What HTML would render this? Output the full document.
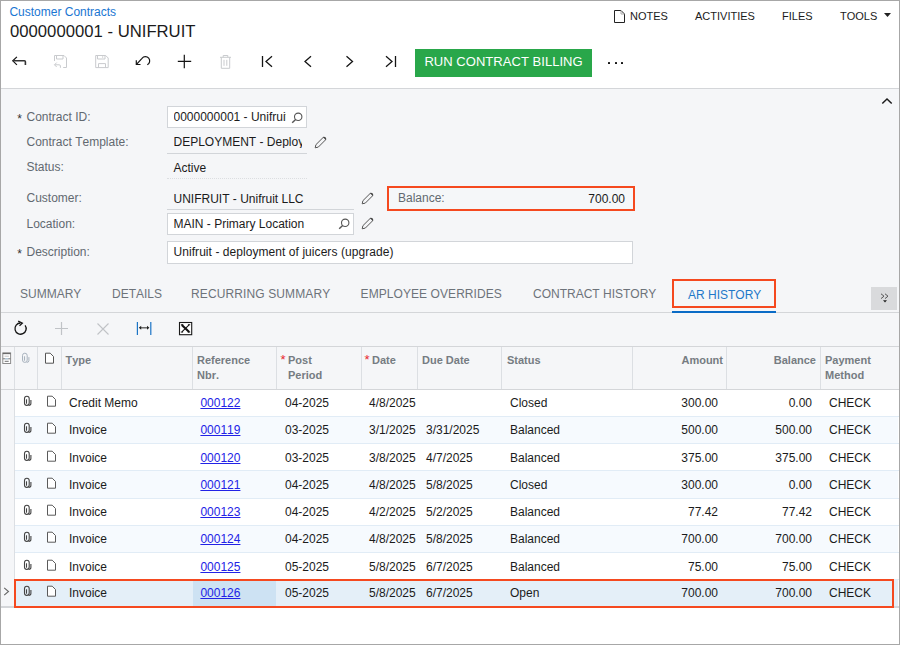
<!DOCTYPE html><html><head><meta charset="utf-8"><style>
html,body{margin:0;padding:0;width:900px;height:645px;overflow:hidden;background:#fff;}
body{position:relative;font-family:"Liberation Sans",sans-serif;}
.t{position:absolute;white-space:nowrap;line-height:1;font-kerning:none;}
.r{position:absolute;box-sizing:border-box;}
</style></head><body>
<div class="r" style="left:0px;top:89px;width:900px;height:301px;background:#f5f6f8;"></div>
<div class="r" style="left:0px;top:88px;width:900px;height:1px;background:#d4d6d9;"></div>
<div class="t" style="left:9.4px;top:5.84px;font-size:12px;color:#1a76d2;">Customer Contracts</div>
<div class="t" style="left:10px;top:23.86px;font-size:16.7px;color:#1b1b1b;">0000000001 - UNIFRUIT</div>
<svg class="r" style="left:613px;top:10px" width="13" height="13" viewBox="0 0 13 13" fill="none"><path d="M1.5 0.5h6.5l3.5 3.5v8.5h-10z" stroke="#222" stroke-width="1" fill="#fff"/><path d="M8 0.5v3.5h3.5" stroke="#aaa" stroke-width="1"/></svg>
<div class="t" style="left:630px;top:10.69px;font-size:11px;color:#1b1b1b;">NOTES</div>
<div class="t" style="left:695px;top:10.69px;font-size:11px;color:#1b1b1b;">ACTIVITIES</div>
<div class="t" style="left:782px;top:10.69px;font-size:11px;color:#1b1b1b;">FILES</div>
<div class="t" style="left:840px;top:10.69px;font-size:11px;color:#1b1b1b;">TOOLS</div>
<svg class="r" style="left:884px;top:13px" width="7" height="4" viewBox="0 0 7 4" fill="none"><path d="M0 0h7l-3.5 4z" fill="#222"/></svg>
<svg class="r" style="left:11px;top:55px" width="16" height="12" viewBox="0 0 16 12" fill="none"><path d="M5.9 1.9L1.8 5.8L5.9 9.9" stroke="#141414" stroke-width="1.2"/><path d="M1.8 5.8h11.6a1 1 0 0 1 1 1v3.2" stroke="#333" stroke-width="1.6"/></svg>
<svg class="r" style="left:53px;top:54px" width="15" height="15" viewBox="0 0 15 15" fill="none"><path d="M1.5 7V1.5h9.5l2.5 2.5v9.5H10.2" stroke="#c9cbce" stroke-width="1"/><path d="M3.5 1.5v3.5h6.5v-3.5" stroke="#c9cbce" stroke-width="1"/><path d="M3.7 8.6L1.5 10.8l2.2 2.2M1.6 10.8h4.6a1.2 1.2 0 0 1 1.2 1.2v1.8" stroke="#c9cbce" stroke-width="1"/></svg>
<svg class="r" style="left:95px;top:55px" width="14" height="14" viewBox="0 0 14 14" fill="none"><path d="M0.7 0.5h10l2.5 2.5v9.6H0.7z" stroke="#c9cbce" stroke-width="1"/><path d="M2.5 0.5v3.5h7.5v-3.5M3.5 12.6v-4h7v4" stroke="#c9cbce" stroke-width="1"/><path d="M7.7 1v2" stroke="#d8d8d8" stroke-width="1"/></svg>
<svg class="r" style="left:134px;top:54px" width="18" height="14" viewBox="0 0 18 14" fill="none"><path d="M2.3 6.3v4.2h4.2" stroke="#141414" stroke-width="1.2"/><path d="M2.5 10.3L8 4.3A4.3 4.3 0 1 1 13.3 10.8" stroke="#141414" stroke-width="1.2"/></svg>
<svg class="r" style="left:177px;top:54px" width="15" height="15" viewBox="0 0 15 15" fill="none"><path d="M7.3 0.8v13.4M0.8 7.3h13.4" stroke="#141414" stroke-width="1.2"/></svg>
<svg class="r" style="left:219px;top:54px" width="13" height="15" viewBox="0 0 13 15" fill="none"><path d="M1 3.3h11M4.2 3.3v-1.8h4.6v1.8M2.3 3.3v11h8.4v-11M5 5.8v6M7.8 5.8v6" stroke="#c9cbce" stroke-width="1"/></svg>
<svg class="r" style="left:261px;top:55px" width="13" height="13" viewBox="0 0 13 13" fill="none"><path d="M1.5 1v11" stroke="#141414" stroke-width="1.3"/><path d="M11 1.3L5 6.5l6 5.2" stroke="#141414" stroke-width="1.3"/></svg>
<svg class="r" style="left:303px;top:55px" width="10" height="13" viewBox="0 0 10 13" fill="none"><path d="M8 1.3L2 6.5l6 5.2" stroke="#141414" stroke-width="1.3"/></svg>
<svg class="r" style="left:345px;top:55px" width="10" height="13" viewBox="0 0 10 13" fill="none"><path d="M1.5 1.3l6 5.2-6 5.2" stroke="#141414" stroke-width="1.3"/></svg>
<svg class="r" style="left:384px;top:55px" width="13" height="13" viewBox="0 0 13 13" fill="none"><path d="M11.5 1v11" stroke="#141414" stroke-width="1.3"/><path d="M2 1.3l6 5.2-6 5.2" stroke="#141414" stroke-width="1.3"/></svg>
<div class="r" style="left:415px;top:49px;width:177px;height:28px;background:#29a74a;"></div>
<div class="t" style="left:424.4px;top:55.00px;font-size:13px;color:#ffffff;letter-spacing:0.04px;">RUN CONTRACT BILLING</div>
<div class="r" style="left:608px;top:62px;width:2px;height:2px;background:#111;border-radius:0.5px;"></div>
<div class="r" style="left:614.5px;top:62px;width:2px;height:2px;background:#111;border-radius:0.5px;"></div>
<div class="r" style="left:621px;top:62px;width:2px;height:2px;background:#111;border-radius:0.5px;"></div>
<svg class="r" style="left:881px;top:97px" width="12" height="8" viewBox="0 0 12 8" fill="none"><path d="M1.3 6.5L6 2l4.7 4.5" stroke="#1b1b1b" stroke-width="1.5"/></svg>
<div class="t" style="left:17.2px;top:113.34px;font-size:12px;color:#333;">*</div>
<div class="t" style="left:26.5px;top:110.84px;font-size:12px;color:#626970;">Contract ID:</div>
<div class="t" style="left:26.5px;top:135.84px;font-size:12px;color:#626970;">Contract Template:</div>
<div class="t" style="left:26.5px;top:160.84px;font-size:12px;color:#626970;">Status:</div>
<div class="t" style="left:26.5px;top:191.84px;font-size:12px;color:#626970;">Customer:</div>
<div class="t" style="left:26.5px;top:217.84px;font-size:12px;color:#626970;">Location:</div>
<div class="t" style="left:17.2px;top:248.34px;font-size:12px;color:#333;">*</div>
<div class="t" style="left:26.5px;top:245.84px;font-size:12px;color:#626970;">Description:</div>
<div class="r" style="left:167px;top:106px;width:140px;height:22px;background:#fff;border:1px solid #d2d5d9;"></div>
<div class="t" style="left:173.5px;top:110.84px;font-size:12px;color:#1b1b1b;width:112.3px;overflow:hidden;">0000000001 - Unifruit LLC</div>
<svg class="r" style="left:291px;top:112px" width="12" height="12" viewBox="0 0 12 12" fill="none"><circle cx="7.2" cy="4.8" r="3.7" stroke="#555" stroke-width="1.1"/><path d="M4.6 7.4L1.2 10.8" stroke="#555" stroke-width="1.4"/></svg>
<div class="t" style="left:173.5px;top:135.84px;font-size:12px;color:#1b1b1b;width:128px;overflow:hidden;">DEPLOYMENT - Deployment</div>
<div class="r" style="left:167px;top:153px;width:140px;height:1px;background:#d2d5d9;"></div>
<svg class="r" style="left:314px;top:136px" width="13" height="13" viewBox="0 0 13 13" fill="none"><path d="M1.2 11.8l0.7-3.1L9 1.6a1.3 1.3 0 0 1 1.9 0l0.5 0.5a1.3 1.3 0 0 1 0 1.9L4.3 11.1z" stroke="#555" stroke-width="1"/><path d="M9.2 1.5l2.3 2.3 0.5-0.9-0.1-1.1-1-0.9-1 0z" fill="#444"/></svg>
<div class="t" style="left:173.5px;top:161.84px;font-size:12px;color:#1b1b1b;">Active</div>
<div class="r" style="left:167px;top:178px;width:140px;height:1px;border-top:1px dotted #dcdee1;"></div>
<div class="t" style="left:173.5px;top:192.84px;font-size:12px;color:#1b1b1b;">UNIFRUIT - Unifruit LLC</div>
<div class="r" style="left:167px;top:209px;width:187px;height:1px;background:#d2d5d9;"></div>
<svg class="r" style="left:361px;top:192px" width="13" height="13" viewBox="0 0 13 13" fill="none"><path d="M1.2 11.8l0.7-3.1L9 1.6a1.3 1.3 0 0 1 1.9 0l0.5 0.5a1.3 1.3 0 0 1 0 1.9L4.3 11.1z" stroke="#555" stroke-width="1"/><path d="M9.2 1.5l2.3 2.3 0.5-0.9-0.1-1.1-1-0.9-1 0z" fill="#444"/></svg>
<div class="r" style="left:167px;top:213px;width:187px;height:22px;background:#fff;border:1px solid #d2d5d9;"></div>
<div class="t" style="left:173.5px;top:217.84px;font-size:12px;color:#1b1b1b;">MAIN - Primary Location</div>
<svg class="r" style="left:338px;top:218px" width="12" height="12" viewBox="0 0 12 12" fill="none"><circle cx="7.2" cy="4.8" r="3.7" stroke="#555" stroke-width="1.1"/><path d="M4.6 7.4L1.2 10.8" stroke="#555" stroke-width="1.4"/></svg>
<svg class="r" style="left:361px;top:217px" width="13" height="13" viewBox="0 0 13 13" fill="none"><path d="M1.2 11.8l0.7-3.1L9 1.6a1.3 1.3 0 0 1 1.9 0l0.5 0.5a1.3 1.3 0 0 1 0 1.9L4.3 11.1z" stroke="#555" stroke-width="1"/><path d="M9.2 1.5l2.3 2.3 0.5-0.9-0.1-1.1-1-0.9-1 0z" fill="#444"/></svg>
<div class="r" style="left:167px;top:241px;width:466px;height:23px;background:#fff;border:1px solid #d2d5d9;"></div>
<div class="t" style="left:173.5px;top:245.84px;font-size:12px;color:#1b1b1b;letter-spacing:0.06px;">Unifruit - deployment of juicers (upgrade)</div>
<div class="r" style="left:387px;top:186px;width:248px;height:25px;border:2px solid #f5491f;background:#f5f7f9;"></div>
<div class="t" style="left:398px;top:191.84px;font-size:12px;color:#626970;">Balance:</div>
<div class="t" style="right:275px;top:192.84px;font-size:12px;color:#1b1b1b;">700.00</div>
<div class="t" style="left:20px;top:287.84px;font-size:12px;color:#6d737a;">SUMMARY</div>
<div class="t" style="left:112px;top:287.84px;font-size:12px;color:#6d737a;">DETAILS</div>
<div class="t" style="left:191px;top:287.84px;font-size:12px;color:#6d737a;letter-spacing:0.12px;">RECURRING SUMMARY</div>
<div class="t" style="left:360.6px;top:287.84px;font-size:12px;color:#6d737a;letter-spacing:0.07px;">EMPLOYEE OVERRIDES</div>
<div class="t" style="left:533px;top:287.84px;font-size:12px;color:#6d737a;">CONTRACT HISTORY</div>
<div class="t" style="left:688px;top:288.84px;font-size:12px;color:#1f78c8;">AR HISTORY</div>
<div class="r" style="left:672px;top:279px;width:104px;height:29px;border:2px solid #f5491f;"></div>
<div class="r" style="left:0px;top:312px;width:900px;height:1px;background:#d4d6d9;"></div>
<div class="r" style="left:672px;top:311px;width:104px;height:2px;background:#0a6bc6;"></div>
<div class="r" style="left:871px;top:287px;width:26px;height:23px;background:#d9dadc;"></div>
<svg class="r" style="left:880px;top:293px" width="11" height="10" viewBox="0 0 11 10" fill="none"><path d="M1 0.8l3 2.4-3 2.4M5 0.8l3 2.4-3 2.4" stroke="#555" stroke-width="1"/><path d="M3 7.3h4l-2 2.2z" fill="#222"/></svg>
<svg class="r" style="left:13px;top:320px" width="16" height="16" viewBox="0 0 16 16" fill="none"><path d="M7.5 3A5.6 5.6 0 1 0 12.1 5.3" stroke="#141414" stroke-width="1.3"/><path d="M5.2 1.2L9.3 3.2L6.5 5.7" stroke="#141414" stroke-width="1.3"/></svg>
<svg class="r" style="left:55px;top:322px" width="13" height="13" viewBox="0 0 13 13" fill="none"><path d="M6.5 0v13M0 6.5h13" stroke="#c0c3c7" stroke-width="1.2"/></svg>
<svg class="r" style="left:97px;top:323px" width="12" height="12" viewBox="0 0 12 12" fill="none"><path d="M0.5 0.5l11 11M11.5 0.5l-11 11" stroke="#c0c3c7" stroke-width="1.1"/></svg>
<svg class="r" style="left:136px;top:321px" width="17" height="15" viewBox="0 0 17 15" fill="none"><path d="M1.4 1v13M14.8 1v13" stroke="#1c74c6" stroke-width="1.2"/><path d="M4 6.8h8" stroke="#555" stroke-width="1.3"/><path d="M2.8 6.8l2.4-2v4zM13.4 6.8l-2.4-2v4z" fill="#222"/></svg>
<svg class="r" style="left:178px;top:321px" width="15" height="15" viewBox="0 0 15 15" fill="none"><rect x="1.5" y="1.5" width="12.2" height="12.2" stroke="#1a1a1a" stroke-width="1.1" fill="#fff"/><path d="M3.8 3.9L11.2 10.9" stroke="#111" stroke-width="2.1"/><path d="M11.1 3.9L3.9 10.9" stroke="#111" stroke-width="1.1"/><path d="M2.9 3.7h2.4M9.9 3.7h2.3M2.8 11.1h2.3M9.7 11.1h2.5" stroke="#111" stroke-width="0.9"/></svg>
<div class="r" style="left:0px;top:346px;width:900px;height:1px;background:#d4d6d9;"></div>
<div class="r" style="left:14px;top:347px;width:1px;height:42px;background:#dcdfe3;"></div>
<div class="r" style="left:37px;top:347px;width:1px;height:42px;background:#dcdfe3;"></div>
<div class="r" style="left:61px;top:347px;width:1px;height:42px;background:#dcdfe3;"></div>
<div class="r" style="left:192px;top:347px;width:1px;height:42px;background:#dcdfe3;"></div>
<div class="r" style="left:276px;top:347px;width:1px;height:42px;background:#dcdfe3;"></div>
<div class="r" style="left:361px;top:347px;width:1px;height:42px;background:#dcdfe3;"></div>
<div class="r" style="left:417px;top:347px;width:1px;height:42px;background:#dcdfe3;"></div>
<div class="r" style="left:501px;top:347px;width:1px;height:42px;background:#dcdfe3;"></div>
<div class="r" style="left:632px;top:347px;width:1px;height:42px;background:#dcdfe3;"></div>
<div class="r" style="left:726px;top:347px;width:1px;height:42px;background:#dcdfe3;"></div>
<div class="r" style="left:820px;top:347px;width:1px;height:42px;background:#dcdfe3;"></div>
<div class="r" style="left:0px;top:389px;width:900px;height:1px;background:#d4d6d9;"></div>
<svg class="r" style="left:2px;top:352px" width="10" height="12" viewBox="0 0 10 12" fill="none"><rect x="0.8" y="0.9" width="7.8" height="10.6" stroke="#8d8d8d" stroke-width="1" fill="#fff"/><path d="M0.8 1.5h7.8" stroke="#6a6a6a" stroke-width="1.3"/><path d="M2.5 4.2h4.4" stroke="#c4c4c4" stroke-width="1"/><path d="M0.8 6.8h7.8" stroke="#7a7a7a" stroke-width="1"/><path d="M3 6.8h3.4" stroke="#bcdcf2" stroke-width="1"/><path d="M2.7 9.3h4" stroke="#6f6f6f" stroke-width="1"/></svg>
<svg class="r" style="left:21px;top:351px" width="10" height="13" viewBox="0 0 10 13" fill="none"><rect x="1.5" y="2.2" width="4.7" height="9.2" rx="2.35" stroke="#a9b3be" stroke-width="1.0"/><path d="M3.5 5.3v4.4" stroke="#a9b3be" stroke-width="1.1"/><path d="M7.9 6.1v3.5q0 1.8-2.2 1.8" stroke="#a9b3be" stroke-width="1.0"/></svg>
<svg class="r" style="left:44px;top:351.5px" width="11" height="13" viewBox="0 0 11 13" fill="none"><path d="M1.5 1.2h4.7l3.3 3.3v6.7H1.5z" stroke="#555" stroke-width="1" fill="#fff"/></svg>
<div class="t" style="left:65.5px;top:354.69px;font-size:11px;color:#767c82;font-weight:bold;">Type</div>
<div class="t" style="left:197px;top:354.69px;font-size:11px;color:#767c82;font-weight:bold;">Reference</div>
<div class="t" style="left:197px;top:369.69px;font-size:11px;color:#767c82;font-weight:bold;">Nbr.</div>
<div class="t" style="left:280.5px;top:353.00px;font-size:13px;color:#e8262e;">*</div>
<div class="t" style="left:288px;top:354.69px;font-size:11px;color:#767c82;font-weight:bold;">Post</div>
<div class="t" style="left:288px;top:369.69px;font-size:11px;color:#767c82;font-weight:bold;">Period</div>
<div class="t" style="left:364.5px;top:353.00px;font-size:13px;color:#e8262e;">*</div>
<div class="t" style="left:372px;top:354.69px;font-size:11px;color:#767c82;font-weight:bold;">Date</div>
<div class="t" style="left:422px;top:354.69px;font-size:11px;color:#767c82;font-weight:bold;">Due Date</div>
<div class="t" style="left:507px;top:354.69px;font-size:11px;color:#767c82;font-weight:bold;">Status</div>
<div class="t" style="right:177px;top:354.69px;font-size:11px;color:#767c82;font-weight:bold;">Amount</div>
<div class="t" style="right:84px;top:354.69px;font-size:11px;color:#767c82;font-weight:bold;">Balance</div>
<div class="t" style="left:825px;top:354.69px;font-size:11px;color:#767c82;font-weight:bold;">Payment</div>
<div class="t" style="left:825px;top:369.69px;font-size:11px;color:#767c82;font-weight:bold;">Method</div>
<div class="r" style="left:0px;top:390px;width:14px;height:217px;background:#f5f6f8;"></div>
<div class="r" style="left:14px;top:390px;width:1px;height:217px;background:#dcdfe3;"></div>
<div class="r" style="left:15px;top:390px;width:883px;height:26px;background:#ffffff;"></div>
<div class="r" style="left:15px;top:416px;width:884px;height:1px;background:#e1ecf6;"></div>
<svg class="r" style="left:23px;top:394px" width="10" height="13" viewBox="0 0 10 13" fill="none"><rect x="1.5" y="2.2" width="4.7" height="9.2" rx="2.35" stroke="#444" stroke-width="1.1"/><path d="M3.5 5.3v4.4" stroke="#444" stroke-width="1.1"/><path d="M7.9 6.1v3.5q0 1.8-2.2 1.8" stroke="#444" stroke-width="1.1"/></svg>
<svg class="r" style="left:46px;top:395px" width="11" height="13" viewBox="0 0 11 13" fill="none"><path d="M1.5 1.2h4.7l3.3 3.3v6.7H1.5z" stroke="#5a5a5a" stroke-width="1" fill="#fff"/></svg>
<div class="t" style="left:69px;top:396.84px;font-size:12px;color:#1b1b1b;">Credit Memo</div>
<div class="t" style="left:200.4px;top:396.84px;font-size:12px;color:#2222e6;"><u>000122</u></div>
<div class="t" style="left:285px;top:396.84px;font-size:12px;color:#1b1b1b;">04-2025</div>
<div class="t" style="left:369px;top:396.84px;font-size:12px;color:#1b1b1b;">4/8/2025</div>
<div class="t" style="left:426px;top:396.84px;font-size:12px;color:#1b1b1b;"></div>
<div class="t" style="left:510px;top:396.84px;font-size:12px;color:#1b1b1b;">Closed</div>
<div class="t" style="right:182px;top:396.84px;font-size:12px;color:#1b1b1b;">300.00</div>
<div class="t" style="right:88px;top:396.84px;font-size:12px;color:#1b1b1b;">0.00</div>
<div class="t" style="left:829px;top:396.84px;font-size:12px;color:#1b1b1b;">CHECK</div>
<div class="r" style="left:15px;top:417px;width:883px;height:26px;background:#f6fafe;"></div>
<div class="r" style="left:15px;top:443px;width:884px;height:1px;background:#e1ecf6;"></div>
<svg class="r" style="left:23px;top:421px" width="10" height="13" viewBox="0 0 10 13" fill="none"><rect x="1.5" y="2.2" width="4.7" height="9.2" rx="2.35" stroke="#444" stroke-width="1.1"/><path d="M3.5 5.3v4.4" stroke="#444" stroke-width="1.1"/><path d="M7.9 6.1v3.5q0 1.8-2.2 1.8" stroke="#444" stroke-width="1.1"/></svg>
<svg class="r" style="left:46px;top:422px" width="11" height="13" viewBox="0 0 11 13" fill="none"><path d="M1.5 1.2h4.7l3.3 3.3v6.7H1.5z" stroke="#5a5a5a" stroke-width="1" fill="#fff"/></svg>
<div class="t" style="left:69px;top:423.84px;font-size:12px;color:#1b1b1b;">Invoice</div>
<div class="t" style="left:200.4px;top:423.84px;font-size:12px;color:#2222e6;"><u>000119</u></div>
<div class="t" style="left:285px;top:423.84px;font-size:12px;color:#1b1b1b;">03-2025</div>
<div class="t" style="left:369px;top:423.84px;font-size:12px;color:#1b1b1b;">3/1/2025</div>
<div class="t" style="left:426px;top:423.84px;font-size:12px;color:#1b1b1b;">3/31/2025</div>
<div class="t" style="left:510px;top:423.84px;font-size:12px;color:#1b1b1b;">Balanced</div>
<div class="t" style="right:182px;top:423.84px;font-size:12px;color:#1b1b1b;">500.00</div>
<div class="t" style="right:88px;top:423.84px;font-size:12px;color:#1b1b1b;">500.00</div>
<div class="t" style="left:829px;top:423.84px;font-size:12px;color:#1b1b1b;">CHECK</div>
<div class="r" style="left:15px;top:444px;width:883px;height:26px;background:#ffffff;"></div>
<div class="r" style="left:15px;top:470px;width:884px;height:1px;background:#e1ecf6;"></div>
<svg class="r" style="left:23px;top:449px" width="10" height="13" viewBox="0 0 10 13" fill="none"><rect x="1.5" y="2.2" width="4.7" height="9.2" rx="2.35" stroke="#444" stroke-width="1.1"/><path d="M3.5 5.3v4.4" stroke="#444" stroke-width="1.1"/><path d="M7.9 6.1v3.5q0 1.8-2.2 1.8" stroke="#444" stroke-width="1.1"/></svg>
<svg class="r" style="left:46px;top:450px" width="11" height="13" viewBox="0 0 11 13" fill="none"><path d="M1.5 1.2h4.7l3.3 3.3v6.7H1.5z" stroke="#5a5a5a" stroke-width="1" fill="#fff"/></svg>
<div class="t" style="left:69px;top:451.84px;font-size:12px;color:#1b1b1b;">Invoice</div>
<div class="t" style="left:200.4px;top:451.84px;font-size:12px;color:#2222e6;"><u>000120</u></div>
<div class="t" style="left:285px;top:451.84px;font-size:12px;color:#1b1b1b;">03-2025</div>
<div class="t" style="left:369px;top:451.84px;font-size:12px;color:#1b1b1b;">3/8/2025</div>
<div class="t" style="left:426px;top:451.84px;font-size:12px;color:#1b1b1b;">4/7/2025</div>
<div class="t" style="left:510px;top:451.84px;font-size:12px;color:#1b1b1b;">Balanced</div>
<div class="t" style="right:182px;top:451.84px;font-size:12px;color:#1b1b1b;">375.00</div>
<div class="t" style="right:88px;top:451.84px;font-size:12px;color:#1b1b1b;">375.00</div>
<div class="t" style="left:829px;top:451.84px;font-size:12px;color:#1b1b1b;">CHECK</div>
<div class="r" style="left:15px;top:471px;width:883px;height:27px;background:#f6fafe;"></div>
<div class="r" style="left:15px;top:498px;width:884px;height:1px;background:#e1ecf6;"></div>
<svg class="r" style="left:23px;top:476px" width="10" height="13" viewBox="0 0 10 13" fill="none"><rect x="1.5" y="2.2" width="4.7" height="9.2" rx="2.35" stroke="#444" stroke-width="1.1"/><path d="M3.5 5.3v4.4" stroke="#444" stroke-width="1.1"/><path d="M7.9 6.1v3.5q0 1.8-2.2 1.8" stroke="#444" stroke-width="1.1"/></svg>
<svg class="r" style="left:46px;top:477px" width="11" height="13" viewBox="0 0 11 13" fill="none"><path d="M1.5 1.2h4.7l3.3 3.3v6.7H1.5z" stroke="#5a5a5a" stroke-width="1" fill="#fff"/></svg>
<div class="t" style="left:69px;top:478.84px;font-size:12px;color:#1b1b1b;">Invoice</div>
<div class="t" style="left:200.4px;top:478.84px;font-size:12px;color:#2222e6;"><u>000121</u></div>
<div class="t" style="left:285px;top:478.84px;font-size:12px;color:#1b1b1b;">04-2025</div>
<div class="t" style="left:369px;top:478.84px;font-size:12px;color:#1b1b1b;">4/8/2025</div>
<div class="t" style="left:426px;top:478.84px;font-size:12px;color:#1b1b1b;">5/8/2025</div>
<div class="t" style="left:510px;top:478.84px;font-size:12px;color:#1b1b1b;">Closed</div>
<div class="t" style="right:182px;top:478.84px;font-size:12px;color:#1b1b1b;">300.00</div>
<div class="t" style="right:88px;top:478.84px;font-size:12px;color:#1b1b1b;">0.00</div>
<div class="t" style="left:829px;top:478.84px;font-size:12px;color:#1b1b1b;">CHECK</div>
<div class="r" style="left:15px;top:499px;width:883px;height:26px;background:#ffffff;"></div>
<div class="r" style="left:15px;top:525px;width:884px;height:1px;background:#e1ecf6;"></div>
<svg class="r" style="left:23px;top:503px" width="10" height="13" viewBox="0 0 10 13" fill="none"><rect x="1.5" y="2.2" width="4.7" height="9.2" rx="2.35" stroke="#444" stroke-width="1.1"/><path d="M3.5 5.3v4.4" stroke="#444" stroke-width="1.1"/><path d="M7.9 6.1v3.5q0 1.8-2.2 1.8" stroke="#444" stroke-width="1.1"/></svg>
<svg class="r" style="left:46px;top:504px" width="11" height="13" viewBox="0 0 11 13" fill="none"><path d="M1.5 1.2h4.7l3.3 3.3v6.7H1.5z" stroke="#5a5a5a" stroke-width="1" fill="#fff"/></svg>
<div class="t" style="left:69px;top:505.84px;font-size:12px;color:#1b1b1b;">Invoice</div>
<div class="t" style="left:200.4px;top:505.84px;font-size:12px;color:#2222e6;"><u>000123</u></div>
<div class="t" style="left:285px;top:505.84px;font-size:12px;color:#1b1b1b;">04-2025</div>
<div class="t" style="left:369px;top:505.84px;font-size:12px;color:#1b1b1b;">4/2/2025</div>
<div class="t" style="left:426px;top:505.84px;font-size:12px;color:#1b1b1b;">5/2/2025</div>
<div class="t" style="left:510px;top:505.84px;font-size:12px;color:#1b1b1b;">Balanced</div>
<div class="t" style="right:182px;top:505.84px;font-size:12px;color:#1b1b1b;">77.42</div>
<div class="t" style="right:88px;top:505.84px;font-size:12px;color:#1b1b1b;">77.42</div>
<div class="t" style="left:829px;top:505.84px;font-size:12px;color:#1b1b1b;">CHECK</div>
<div class="r" style="left:15px;top:526px;width:883px;height:26px;background:#f6fafe;"></div>
<div class="r" style="left:15px;top:552px;width:884px;height:1px;background:#e1ecf6;"></div>
<svg class="r" style="left:23px;top:530px" width="10" height="13" viewBox="0 0 10 13" fill="none"><rect x="1.5" y="2.2" width="4.7" height="9.2" rx="2.35" stroke="#444" stroke-width="1.1"/><path d="M3.5 5.3v4.4" stroke="#444" stroke-width="1.1"/><path d="M7.9 6.1v3.5q0 1.8-2.2 1.8" stroke="#444" stroke-width="1.1"/></svg>
<svg class="r" style="left:46px;top:531px" width="11" height="13" viewBox="0 0 11 13" fill="none"><path d="M1.5 1.2h4.7l3.3 3.3v6.7H1.5z" stroke="#5a5a5a" stroke-width="1" fill="#fff"/></svg>
<div class="t" style="left:69px;top:532.84px;font-size:12px;color:#1b1b1b;">Invoice</div>
<div class="t" style="left:200.4px;top:532.84px;font-size:12px;color:#2222e6;"><u>000124</u></div>
<div class="t" style="left:285px;top:532.84px;font-size:12px;color:#1b1b1b;">04-2025</div>
<div class="t" style="left:369px;top:532.84px;font-size:12px;color:#1b1b1b;">4/8/2025</div>
<div class="t" style="left:426px;top:532.84px;font-size:12px;color:#1b1b1b;">5/8/2025</div>
<div class="t" style="left:510px;top:532.84px;font-size:12px;color:#1b1b1b;">Balanced</div>
<div class="t" style="right:182px;top:532.84px;font-size:12px;color:#1b1b1b;">700.00</div>
<div class="t" style="right:88px;top:532.84px;font-size:12px;color:#1b1b1b;">700.00</div>
<div class="t" style="left:829px;top:532.84px;font-size:12px;color:#1b1b1b;">CHECK</div>
<div class="r" style="left:15px;top:553px;width:883px;height:26px;background:#ffffff;"></div>
<div class="r" style="left:15px;top:579px;width:884px;height:1px;background:#e1ecf6;"></div>
<svg class="r" style="left:23px;top:558px" width="10" height="13" viewBox="0 0 10 13" fill="none"><rect x="1.5" y="2.2" width="4.7" height="9.2" rx="2.35" stroke="#444" stroke-width="1.1"/><path d="M3.5 5.3v4.4" stroke="#444" stroke-width="1.1"/><path d="M7.9 6.1v3.5q0 1.8-2.2 1.8" stroke="#444" stroke-width="1.1"/></svg>
<svg class="r" style="left:46px;top:559px" width="11" height="13" viewBox="0 0 11 13" fill="none"><path d="M1.5 1.2h4.7l3.3 3.3v6.7H1.5z" stroke="#5a5a5a" stroke-width="1" fill="#fff"/></svg>
<div class="t" style="left:69px;top:560.84px;font-size:12px;color:#1b1b1b;">Invoice</div>
<div class="t" style="left:200.4px;top:560.84px;font-size:12px;color:#2222e6;"><u>000125</u></div>
<div class="t" style="left:285px;top:560.84px;font-size:12px;color:#1b1b1b;">05-2025</div>
<div class="t" style="left:369px;top:560.84px;font-size:12px;color:#1b1b1b;">5/8/2025</div>
<div class="t" style="left:426px;top:560.84px;font-size:12px;color:#1b1b1b;">6/7/2025</div>
<div class="t" style="left:510px;top:560.84px;font-size:12px;color:#1b1b1b;">Balanced</div>
<div class="t" style="right:182px;top:560.84px;font-size:12px;color:#1b1b1b;">75.00</div>
<div class="t" style="right:88px;top:560.84px;font-size:12px;color:#1b1b1b;">75.00</div>
<div class="t" style="left:829px;top:560.84px;font-size:12px;color:#1b1b1b;">CHECK</div>
<div class="r" style="left:15px;top:580px;width:883px;height:26px;background:#e4eff8;"></div>
<div class="r" style="left:193px;top:580px;width:83px;height:27px;background:#cde2f3;"></div>
<svg class="r" style="left:23px;top:584px" width="10" height="13" viewBox="0 0 10 13" fill="none"><rect x="1.5" y="2.2" width="4.7" height="9.2" rx="2.35" stroke="#444" stroke-width="1.1"/><path d="M3.5 5.3v4.4" stroke="#444" stroke-width="1.1"/><path d="M7.9 6.1v3.5q0 1.8-2.2 1.8" stroke="#444" stroke-width="1.1"/></svg>
<svg class="r" style="left:46px;top:585px" width="11" height="13" viewBox="0 0 11 13" fill="none"><path d="M1.5 1.2h4.7l3.3 3.3v6.7H1.5z" stroke="#5a5a5a" stroke-width="1" fill="#fff"/></svg>
<div class="t" style="left:69px;top:586.84px;font-size:12px;color:#1b1b1b;">Invoice</div>
<div class="t" style="left:200.4px;top:586.84px;font-size:12px;color:#2222e6;"><u>000126</u></div>
<div class="t" style="left:285px;top:586.84px;font-size:12px;color:#1b1b1b;">05-2025</div>
<div class="t" style="left:369px;top:586.84px;font-size:12px;color:#1b1b1b;">5/8/2025</div>
<div class="t" style="left:426px;top:586.84px;font-size:12px;color:#1b1b1b;">6/7/2025</div>
<div class="t" style="left:510px;top:586.84px;font-size:12px;color:#1b1b1b;">Open</div>
<div class="t" style="right:182px;top:586.84px;font-size:12px;color:#1b1b1b;">700.00</div>
<div class="t" style="right:88px;top:586.84px;font-size:12px;color:#1b1b1b;">700.00</div>
<div class="t" style="left:829px;top:586.84px;font-size:12px;color:#1b1b1b;">CHECK</div>
<div class="r" style="left:0px;top:606px;width:900px;height:2px;background:#d4d6d9;"></div>
<svg class="r" style="left:3px;top:587px" width="7" height="9" viewBox="0 0 7 9" fill="none"><path d="M1.2 0.8L5.5 4.5L1.2 8.2" stroke="#666" stroke-width="1.1"/></svg>
<div class="r" style="left:14px;top:579px;width:880px;height:29px;border:2px solid #f5491f;"></div>
<div class="r" style="left:0px;top:0px;width:900px;height:645px;border:1px solid #a7a7a7;"></div>
</body></html>
